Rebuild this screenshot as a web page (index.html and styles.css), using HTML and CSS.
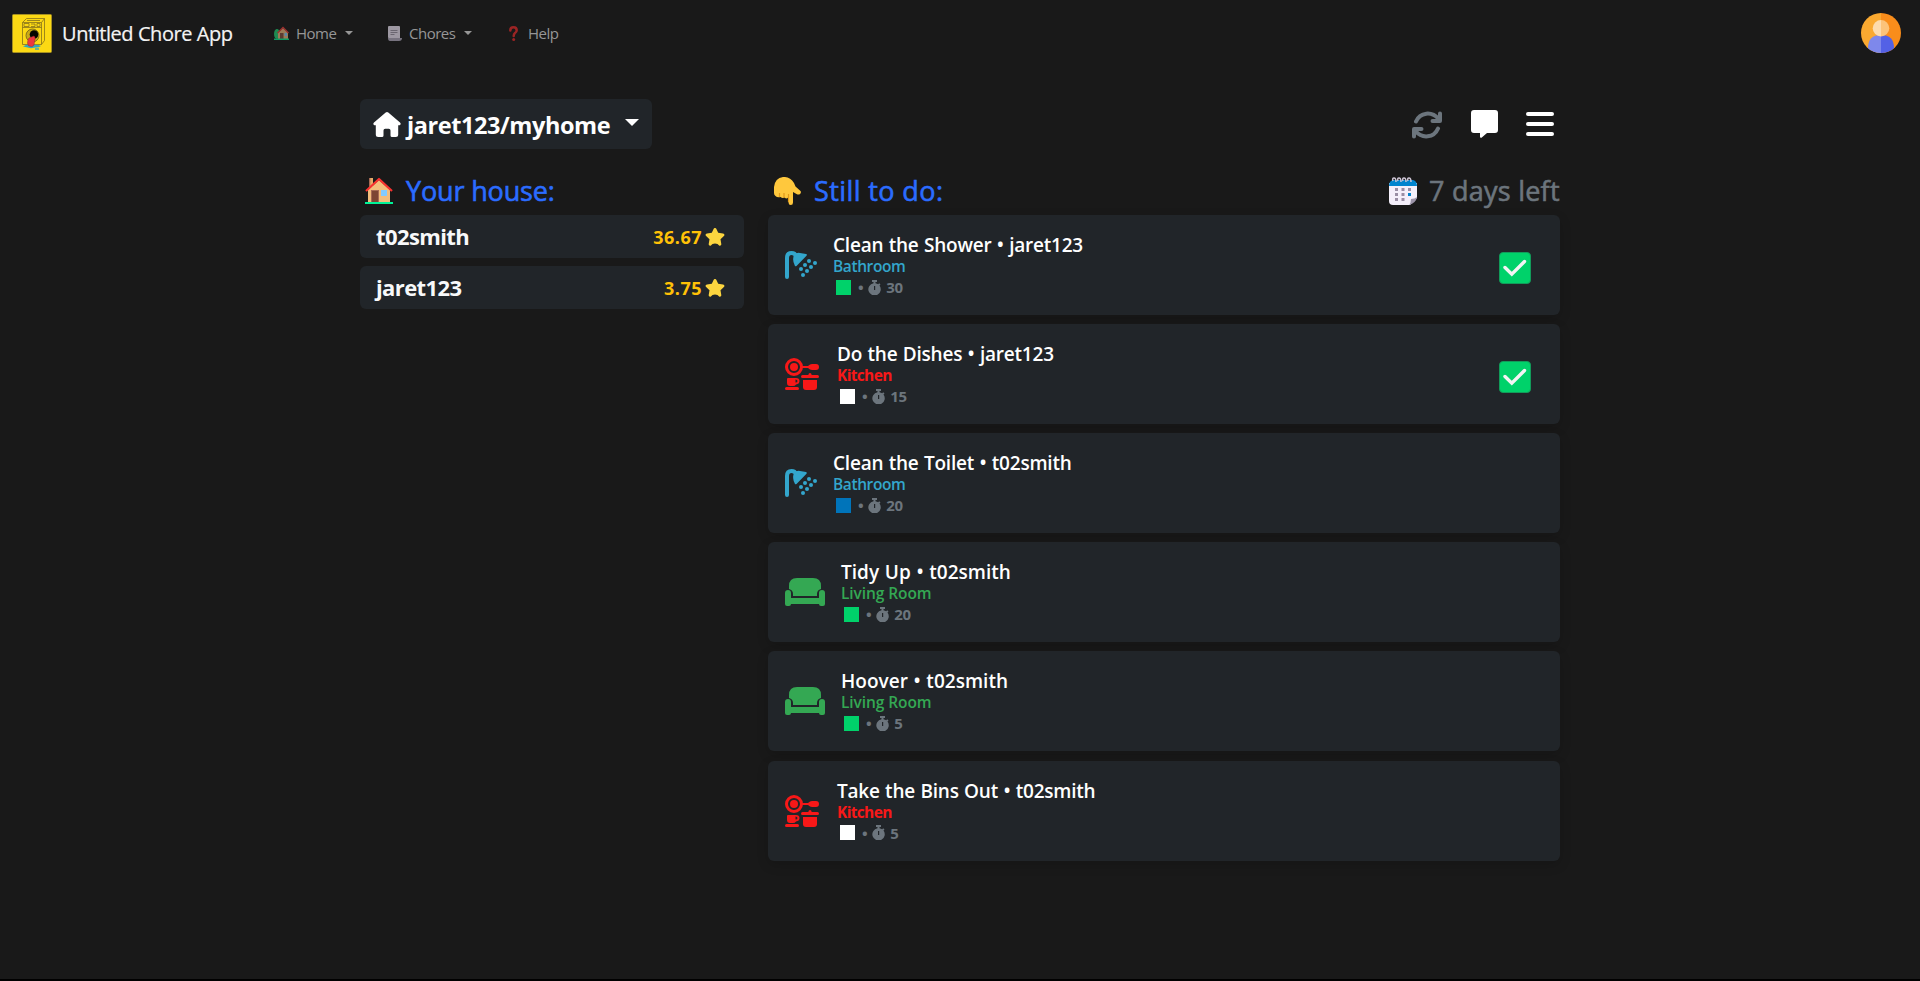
FILE: index.html
```html
<!DOCTYPE html>
<html lang="en">
<head>
<meta charset="utf-8">
<title>Untitled Chore App</title>
<link rel="stylesheet" href="styles.css">
</head>
<body>
<svg class="defs" width="0" height="0">
  <symbol id="house" viewBox="0 0 28 27">
    <path d="M4 1h4v9H4z" fill="#e8ab6a"/><path d="M4 1h1.3v10H4z" fill="#a56953"/>
    <path d="M3 13 14 3l11 10v12H3z" fill="#f3bd7c"/>
    <path d="M1 14 14 2l13 12" fill="none" stroke="#f8312f" stroke-width="2.2" stroke-linejoin="round"/>
    <path d="M6 13h8v12H6z" fill="#a56953"/><path d="M7 14h6v11H7z" fill="#7d4533"/>
    <path d="M16 13h6v6h-6z" fill="#83cbff"/><path d="M0 25h28v2H0z" fill="#00f397"/>
  </symbol>
  <symbol id="star" viewBox="0 0 20 18">
    <path d="M8.700.8c.5-1.100 2-1.100 2.600 0l1.900 4 4.800.6c1.400.2 1.900 1.700.9 2.700l-3.400 3.100.8 4.800c.2 1.400-1.200 2-2.200 1.400L12.500 16q-2.500-1-5 0l-1.600 1.400c-1 .6-2.400 0-2.200-1.400l.8-4.800L1.100 8.100c-1-1-.5-2.500.9-2.700l4.800-.6z" fill="#fcd53f"/>
  </symbol>
  <symbol id="shower" viewBox="0 0 32 28">
    <path d="M2 26V7Q2 2 6.500 2 10 2 11 5" fill="none" stroke="currentColor" stroke-width="4" stroke-linecap="round"/>
    <path d="M9 4Q12 1 15 2l6 1q1.500.5.5 1.700L11.500 15Q10 16 9.600 14 7 9 9 4z" fill="currentColor"/>
    <g fill="currentColor"><circle cx="24" cy="10" r="2"/><circle cx="30" cy="12" r="2"/><circle cx="20" cy="14" r="2"/><circle cx="26" cy="16" r="2"/><circle cx="16" cy="18" r="2"/><circle cx="22" cy="20" r="2"/><circle cx="18" cy="24" r="2"/></g>
  </symbol>
  <symbol id="kitchen" viewBox="0 0 34 32">
    <circle cx="9" cy="9" r="7.500" fill="none" stroke="currentColor" stroke-width="3"/><circle cx="9" cy="9" r="4" fill="currentColor"/>
    <g fill="currentColor"><path d="M16 8h7q2-2 4-2h4q3 0 3 3t-3 3h-4q-2 0-4-2h-7z"/>
    <rect x="0" y="29" width="14" height="3" rx="1.500"/><path d="M2 21q0-1 1-1h8q3.500 0 3.500 3t-3.500 3.500Q10 28 8 28H5q-3 0-3-3z"/>
    <rect x="16" y="17" width="18" height="3" rx="1.500"/><rect x="23.500" y="15" width="3" height="4" rx="1.500"/><path d="M18 22h14v7q0 3-3 3h-8q-3 0-3-3z"/></g>
    <path d="M10.500 21.500q2 0 2 1.500t-2 1.500z" fill="#212529"/>
  </symbol>
  <symbol id="couch" viewBox="0 0 40 28">
    <path d="M4 11V8q0-8 8-8h16q8 0 8 8v3q-4 1-4 5v2H8v-2q0-4-4-5z" fill="currentColor"/>
    <path d="M0 15q0-3 3-3t3 3v5h28v-5q0-3 3-3t3 3v11q0 2-2 2h-2q-2 0-2-2H6q0 2-2 2H2q-2 0-2-2z" fill="currentColor"/>
  </symbol>
  <symbol id="watch" viewBox="0 0 13 15">
    <path d="M4 0h5v2H7.500v1.200q1.600.3 2.700 1l1-1 1.300 1.200-1 1.200A6.200 6.200 0 1 1 5.500 3.200V2H4z" fill="currentColor"/>
    <path d="M6 6h1.200v4H6z" fill="#212529"/>
  </symbol>
  <symbol id="check" viewBox="0 0 32 32">
    <rect x=".5" y=".5" width="31" height="31" rx="3.500" fill="#00d26a" stroke="#129b5a"/>
    <path d="m6 15.500 6.800 6.700L25.500 9.500" fill="none" stroke="#f4f4f4" stroke-width="3.400" stroke-linecap="round"/>
  </symbol>
</svg>

<nav class="navbar">
  <svg class="logo" viewBox="0 0 40 39">
    <rect x=".5" y=".5" width="39" height="38" rx="1" fill="#fcd914" stroke="#a58f21"/>
    <g fill="none" stroke="#85721a" stroke-width=".8"><path d="M10.500 8.500h19v22h-19zM10.500 8.500l4-4h18v22l-3 4M29.500 8.500l3-4M10.500 13.500h19M15 6.500h13"/><path d="M12 9.500h5v3h-5zM19 10h4v2.500h-4M25 9.500h3v3h-3z"/></g>
    <path d="M11 32.500q4-3 9-1.500 6-1 9 1-3 2-6 1.500l-4 .8z" fill="#35a6bb"/><path d="M23 34h4v2h-4z" fill="#6cb58e"/>
    <circle cx="20.500" cy="21.500" r="6.500" fill="#c9aa18" stroke="#85721a"/><circle cx="22" cy="20.500" r="4.300" fill="#050500"/>
    <path d="m17 24 5-2q2 2 .5 5 0 5.500-3 5.500-4 0-4-3.500 0-3 1.500-5z" fill="#ec3740" stroke="#97272c" stroke-width=".5"/>
  </svg>
  <span class="brand">Untitled Chore App</span>
  <div class="nav-item nav-home">
    <svg class="nav-icon" width="15" height="14" viewBox="0 0 15 14"><ellipse cx="3" cy="8" rx="3" ry="5" fill="#1e8a51"/><path d="M4 7 9 2l5 5v6H4z" fill="#9b7a57"/><path d="m3.500 7 5.500-5.500L14.500 7" fill="none" stroke="#9c3230" stroke-width="1.400"/><path d="M6 7h3.500v6H6z" fill="#5c3a30"/><path d="M10.500 7H13v3h-2.500z" fill="#5a86a5"/><path d="M0 12.500h15V14H0z" fill="#109a62"/></svg>
    <span>Home</span><i class="caret"></i>
  </div>
  <div class="nav-item nav-chores">
    <svg class="nav-icon" width="14" height="15" viewBox="0 0 14 15"><path d="M1 0h10q1 0 1 1v12H2q-2 0-2-2V1q0-1 1-1z" fill="#9d98a2"/><path d="M3 12h11q0 3-3 3H2q-2 0-2-3z" fill="#77737f"/><path d="M2.500 4.500h7M2.500 6.500h7M2.500 8.500h4" stroke="#6a6670"/></svg>
    <span>Chores</span><i class="caret"></i>
  </div>
  <div class="nav-item nav-help">
    <svg class="nav-icon" width="9" height="15" viewBox="0 0 9 15"><path d="M1.300 4.500q0-3.200 3.200-3.200t3.200 3q0 1.700-1.700 2.700Q4.700 8 4.700 10" fill="none" stroke="#9b2424" stroke-width="2.500" stroke-linecap="round"/><circle cx="4.700" cy="13.500" r="1.500" fill="#9b2424"/></svg>
    <span>Help</span>
  </div>
  <svg class="avatar" viewBox="0 0 40 40"><clipPath id="disc"><circle cx="20" cy="20" r="20"/></clipPath><g clip-path="url(#disc)"><path d="M0 0h20v40H0z" fill="#faa930"/><path d="M20 0h20v40H20z" fill="#f98d1b"/><path d="M7 40v-5q0-13 13-13v18z" fill="#7e88eb"/><path d="M33 40v-5q0-13-13-13v18z" fill="#5361e6"/></g><path d="M20 7a8 8 0 0 0 0 16.500z" fill="#fddbac"/><path d="M20 7a8 8 0 0 1 0 16.500z" fill="#fcc37a"/></svg>
</nav>

<main class="page">
  <div class="toolbar">
    <div class="picker">
      <svg width="28" height="25" viewBox="0 0 28 25"><path d="M12.700.6q1.300-1 2.600 0L27 10.500q1.200 1.200.3 2.200-.5.600-2.100.5v9.300q0 2.500-2.500 2.500H19q-1.500 0-1.500-1.500v-5q0-1.700-1.700-1.700h-3.600q-1.700 0-1.700 1.700v5Q10.500 25 9 25H5.300q-2.500 0-2.500-2.500v-9.300q-1.600.1-2.100-.5-.9-1 .3-2.200z" fill="#fff"/></svg>
      <span>jaret123/myhome</span><i class="caret caret-lg"></i>
    </div>
    <div class="actions">
      <svg width="30" height="28" viewBox="0 0 30 28"><g fill="none" stroke="#6c757d" stroke-width="4" stroke-linecap="round" stroke-linejoin="round"><path d="M4 10.500C8 1 20 0 26.500 8M28 2.500V10h-7.500M26 17.500C22 27 10 28 3.500 20M2 25.500V18h7.500"/></g></svg>
      <svg width="27" height="28" viewBox="0 0 27 28"><path d="M3 0h21q3 0 3 3v17q0 3-3 3h-8l-5.500 4.700q-1.500.6-1.500-1V23H3q-3 0-3-3V3q0-3 3-3z" fill="#fff"/></svg>
      <svg width="28" height="24" viewBox="0 0 28 24"><path d="M2 2h24M2 12h24M2 22h24" stroke="#fff" stroke-width="4" stroke-linecap="round"/></svg>
    </div>
  </div>

  <div class="columns">
    <section class="house">
      <h2 class="heading"><svg width="28" height="27"><use href="#house"/></svg><span class="h-house">Your house:</span></h2>
      <div class="member"><b>t02smith</b><span class="score">36.67</span><svg width="20" height="18"><use href="#star"/></svg></div>
      <div class="member"><b>jaret123</b><span class="score">3.75</span><svg width="20" height="18"><use href="#star"/></svg></div>
    </section>

    <section class="todo">
      <div class="heading-row">
        <h2 class="heading heading-todo"><svg width="27" height="28" viewBox="0 0 27 28"><path d="M0 10Q1 1 9 0q7-.5 11 6l1.500 3.500 5 4.500q1 1.500-.5 3-1.500 1-3.500 0L19 15v10.500q0 2.500-2.200 2.500t-2.300-2.500V20q-1.500 2.500-4 .500-2 1-4-.500-3 1-5-1Q0 18 0 16z" fill="#ffc83d"/><path d="M5.500 16v4M10 16v4.500M14.500 17v8" stroke="#e29a1a" stroke-width="1.200" fill="none"/></svg><span class="h-todo">Still to do:</span></h2>
        <h2 class="heading days"><svg width="28" height="28" viewBox="0 0 28 28"><path d="M0 6h28v15l-7 7H4q-4 0-4-4z" fill="#f4effa"/><path d="M0 9q0-5 4-6h20q4 1 4 6z" fill="#0084ce"/><path d="M20 28q2-2 2-6 4 0 6-2-1 6-8 8z" fill="#9b93a8"/><path d="M4 4q-1-3 1-3t2 4M9 4q-1-3 1-3t2 4M14 4q-1-3 1-3t2 4M19 4q-1-3 1-3t2 4" fill="none" stroke="#cdc5d5" stroke-width="1.500"/><path d="M6 11h3v3H6zM12.500 11h3v3h-3zM19 11h3v3h-3zM6 16h3v3H6zM12.500 16h3v3h-3zM6 21h3v3H6zM12.500 21h3v3h-3z" fill="#998ea4"/><path d="M19 16h3v3h-3z" fill="#0084ce"/></svg><span class="h-days">7 days left</span></h2>
      </div>

      <article class="card bathroom"><svg width="32" height="28"><use href="#shower"/></svg><div class="info"><h3>Clean the Shower • jaret123</h3><p class="room">Bathroom</p><p class="meta"><i class="square green"></i><span>•</span><svg width="13" height="15"><use href="#watch"/></svg><span>30</span></p></div><svg class="done" width="32" height="32"><use href="#check"/></svg></article>
      <article class="card kitchen"><svg width="34" height="32"><use href="#kitchen"/></svg><div class="info"><h3>Do the Dishes • jaret123</h3><p class="room">Kitchen</p><p class="meta"><i class="square white"></i><span>•</span><svg width="13" height="15"><use href="#watch"/></svg><span>15</span></p></div><svg class="done" width="32" height="32"><use href="#check"/></svg></article>
      <article class="card bathroom"><svg width="32" height="28"><use href="#shower"/></svg><div class="info"><h3>Clean the Toilet • t02smith</h3><p class="room">Bathroom</p><p class="meta"><i class="square blue"></i><span>•</span><svg width="13" height="15"><use href="#watch"/></svg><span>20</span></p></div></article>
      <article class="card living"><svg width="40" height="28"><use href="#couch"/></svg><div class="info"><h3>Tidy Up • t02smith</h3><p class="room">Living Room</p><p class="meta"><i class="square green"></i><span>•</span><svg width="13" height="15"><use href="#watch"/></svg><span>20</span></p></div></article>
      <article class="card living"><svg width="40" height="28"><use href="#couch"/></svg><div class="info"><h3>Hoover • t02smith</h3><p class="room">Living Room</p><p class="meta"><i class="square green"></i><span>•</span><svg width="13" height="15"><use href="#watch"/></svg><span>5</span></p></div></article>
      <article class="card kitchen"><svg width="34" height="32"><use href="#kitchen"/></svg><div class="info"><h3>Take the Bins Out • t02smith</h3><p class="room">Kitchen</p><p class="meta"><i class="square white"></i><span>•</span><svg width="13" height="15"><use href="#watch"/></svg><span>5</span></p></div></article>
    </section>
  </div>
</main>
</body>
</html>
```
FILE: styles.css
```css
* { box-sizing: border-box; }
body { margin: 0; height: 981px; overflow: hidden; background: #191919; border-bottom: 2px solid #000; color: #fff; font-family: "Open Sans", "Noto Sans", sans-serif; }
h2, h3, p { margin: 0; }
svg { flex: none; display: block; }
.defs { position: absolute; }

.navbar { display: flex; align-items: center; height: 66px; padding: 0 19px 0 12px; }
.logo { width: 40px; height: 39px; margin-right: 10px; }
.brand { width: 212px; font-size: 20px; letter-spacing: -.44px; white-space: nowrap; color: #f4f4f4; padding-top: 1px; -webkit-text-stroke: .2px; }
.nav-item { display: flex; align-items: center; height: 30px; font-size: 15px; color: #969696; letter-spacing: -.5px; white-space: nowrap; }
.nav-item .nav-icon { margin-right: 7px; }
.nav-home { width: 114px; }
.nav-chores { width: 121px; }
.nav-help .nav-icon { margin-right: 10px; }
.caret { border: 4.500px solid transparent; border-top-color: currentColor; border-bottom: 0; margin-left: 9px; }
.avatar { width: 40px; height: 40px; margin-left: auto; }

.page { width: 1200px; margin: 0 auto; padding-top: 33px; }
.toolbar { display: flex; justify-content: space-between; height: 50px; }
.picker { display: flex; align-items: center; width: 292px; padding: 0 13px; background: #212529; border-radius: 6px; font-size: 23.500px; font-weight: 700; letter-spacing: -.42px; white-space: nowrap; }
.picker span { margin-left: 6px; width: 204px; padding-top: 1px; }
.caret-lg { border-width: 7px 7px 0; margin: 0 0 3px 14px; }
.actions { display: flex; align-items: center; gap: 28px; padding-right: 6px; }
.actions svg:first-child { margin: 2px 1px 0 0; }

.columns { display: flex; gap: 24px; margin-top: 24px; }
.house { width: 384px; }
.todo { width: 792px; }
.heading { display: flex; align-items: center; height: 42px; padding: 0 0 7px 5px; font-size: 27px; font-weight: 400; -webkit-text-stroke: .6px; color: #2b6cff; white-space: nowrap; line-height: 35px; }
.heading svg { margin-right: 13px; }
.heading-todo { padding-left: 6px; }
.h-house { letter-spacing: -.15px; }
.h-todo { letter-spacing: .4px; }
.h-days { letter-spacing: .25px; }
.heading-row { display: flex; justify-content: space-between; }
.heading.days { color: #6c757d; padding-left: 0; width: 171px; }
.days svg { margin-right: 12px; }

.member { display: flex; align-items: center; height: 43px; margin-bottom: 8px; padding: 0 20px 2px 16px; border-radius: 6px; background: #212529; color: #f8f9fa; font-size: 22px; letter-spacing: -.6px; white-space: nowrap; line-height: 1; }
.member svg, .score { margin-top: 2px; }
.score { margin-left: auto; margin-right: 3px; color: #ffc107; font-size: 18px; font-weight: 700; letter-spacing: .5px; }
.member svg { margin-right: -1px; }

.card { display: flex; align-items: center; height: 100px; margin-bottom: 9.120px; padding: 0 29px 0 17px; background: #212529; border-radius: 6px; box-shadow: 0 4px 12px rgba(0,0,0,.16); }
.info { margin-left: 16px; padding-top: 1px; }
.kitchen .info { margin-left: 18px; }
.card h3 { color: #fff; font-size: 19px; font-weight: 600; line-height: 22px; padding-top: 1px; letter-spacing: -.22px; word-spacing: .7px; white-space: nowrap; }
.living h3 { letter-spacing: .02px; }
.room { font-size: 15.500px; font-weight: 600; line-height: 20px; letter-spacing: -.4px; }
.kitchen .room { font-weight: 700; letter-spacing: -.65px; }
.living .room { letter-spacing: -.08px; }
.meta { display: flex; align-items: center; height: 22px; padding-left: 3px; color: #6c757d; font-size: 15px; font-weight: 700; letter-spacing: -.4px; }
.meta svg { margin: 0 5px; }
.square { width: 15px; height: 15px; margin-right: 7px; }
.green { background: #00d26a; }
.white { background: #fff; }
.blue { background: #0074ba; }
.bathroom { color: #33a6cc; }
.kitchen { color: #f81818; }
.living { color: #34a853; }
.done { margin: 5px 0 0 auto; }
```
